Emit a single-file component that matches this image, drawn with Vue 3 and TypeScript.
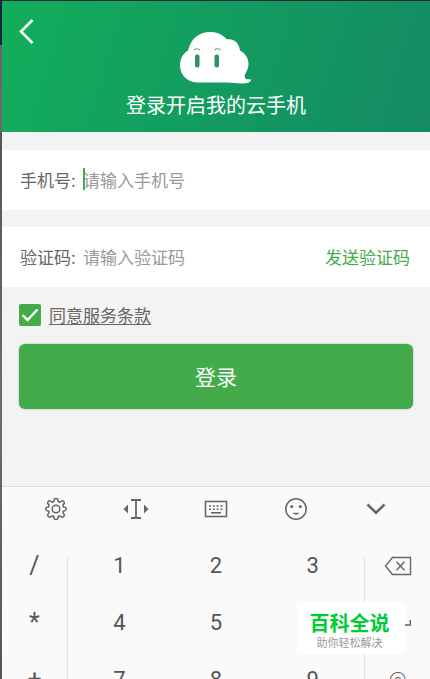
<script setup lang="ts">
import { ref } from 'vue'

const phone = ref<string>('')
const code = ref<string>('')
const agreed = ref<boolean>(true)

const symbols: string[] = ['/', '*', '+']
const digits: string[] = ['1', '2', '3', '4', '5', '6', '7', '8', '9']
</script>

<template>
  <div class="screen">
    <div class="backdrop" aria-hidden="true"></div>
    <main class="login">
      <header class="hero">
        <button class="back" type="button" aria-label="返回">
          <svg width="16" height="26" viewBox="0 0 16 26" fill="none" stroke="#fff" stroke-width="2.6">
            <path d="M14.500 2 3 13.500 14.500 25" />
          </svg>
        </button>
        <svg class="cloud" width="74" height="54" viewBox="0 0 74 54" aria-hidden="true">
          <path
            fill="#fff"
            d="M18 52.500C8 52 1 44.500 1 35.500C1 28.500 4 23.500 9 20.500C12 8.500 20 2 31 2C38.500 2 43.500 4.500 48 9.500C55 8.500 60 13 61 20.500C66.500 23.500 69.500 28.500 69.500 34C69.500 39.500 66.500 42.500 65.800 45.500C65 49 68 49.500 72.500 49.500C71 53 66.500 53.800 62 53.500C56 53.200 52 52.200 46 52.500Z"
          />
          <g fill="#2b9461">
            <rect x="16" y="24.500" width="4.500" height="13" rx="2" />
            <rect x="35.500" y="24.500" width="4.500" height="13" rx="2" />
          </g>
          <path d="M15 20Q18 17.500 21 20M35.500 20Q38.500 17.500 41.500 20" fill="none" stroke="#5fae88" stroke-width="1.200" />
        </svg>
        <h1>登录开启我的云手机</h1>
      </header>

      <form class="form" @submit.prevent>
        <div class="row">
          <label for="phone">手机号:</label>
          <div class="field">
            <input id="phone" v-model="phone" class="active" type="tel" placeholder="请输入手机号" />
            <span class="caret"></span>
          </div>
        </div>
        <div class="row">
          <label for="code">验证码:</label>
          <div class="field">
            <input id="code" v-model="code" type="text" placeholder="请输入验证码" />
          </div>
          <button class="send" type="button">发送验证码</button>
        </div>
        <div class="terms">
          <input id="agree" v-model="agreed" type="checkbox" aria-label="同意服务条款" />
          <svg v-if="agreed" class="tick" width="22" height="22" viewBox="0 0 22 22" fill="none" stroke="#fff" stroke-width="2.400" aria-hidden="true">
            <path d="M3.500 11 8.500 16 18.500 5.500" />
          </svg>
          <a href="#terms">同意服务条款</a>
        </div>
        <button class="submit" type="submit">登录</button>
      </form>

      <section class="keyboard" aria-label="键盘">
        <div class="tools">
          <button type="button" aria-label="设置">
            <svg width="24" height="24" viewBox="0 0 24 24" fill="none" stroke="#666" stroke-width="1.500" stroke-linejoin="round">
              <circle cx="12" cy="12" r="3.800" />
              <path d="M10.300 2.200Q12 1 13.700 2.200Q13.700 5 15.800 5.200Q17.500 3.500 19 3.900Q20.500 5 20.300 6.400Q18.300 8.300 19.400 10.100Q22 10.200 22.300 12Q22 13.900 19.400 13.900Q18.300 15.700 20.300 17.600Q20.500 19 19 20.100Q17.500 20.500 15.800 18.800Q13.700 19 13.700 21.800Q12 23 10.300 21.800Q10.300 19 8.200 18.800Q6.500 20.500 5 20.100Q3.500 19 3.700 17.600Q5.700 15.700 4.600 13.900Q2 13.900 1.700 12Q2 10.200 4.600 10.100Q5.700 8.300 3.700 6.400Q3.500 5 5 3.900Q6.500 3.500 8.200 5.200Q10.300 5 10.300 2.200Z" />
            </svg>
          </button>
          <button type="button" aria-label="移动光标">
            <svg width="26" height="22" viewBox="0 0 26 22">
              <path d="M8 2h10M8 20h10M13 2v18" fill="none" stroke="#666" stroke-width="1.800" />
              <path d="M5 6.500v9L.5 11zM21 6.500v9l4.500-4.500z" fill="#666" />
            </svg>
          </button>
          <button type="button" aria-label="切换键盘">
            <svg width="24" height="18" viewBox="0 0 24 18" fill="none" stroke="#666" stroke-width="1.600">
              <rect x="1.500" y="1.500" width="21" height="15" />
              <path d="M5 6h14M5 9.200h14" stroke-width="1.600" stroke-dasharray="2 1.800" />
              <path d="M7 12.800h10" />
            </svg>
          </button>
          <button type="button" aria-label="表情">
            <svg width="24" height="24" viewBox="0 0 24 24" fill="none" stroke="#666" stroke-width="1.500">
              <circle cx="12" cy="12" r="10.200" />
              <path d="M9.500 15.800q2.500 2.200 5 0" />
              <g fill="#666" stroke="none">
                <circle cx="7.700" cy="9.400" r="1.500" />
                <circle cx="16.300" cy="9.400" r="1.500" />
              </g>
            </svg>
          </button>
          <button type="button" aria-label="收起键盘">
            <svg width="20" height="12" viewBox="0 0 20 12" fill="none" stroke="#666" stroke-width="2.600">
              <path d="M1.500 1.500 10 9.700 18.500 1.500" />
            </svg>
          </button>
        </div>
        <div class="keys">
          <div class="side symbols">
            <button v-for="s in symbols" :key="s" class="key" type="button">{{ s }}</button>
          </div>
          <div class="digits">
            <button v-for="d in digits" :key="d" class="key" type="button">{{ d }}</button>
          </div>
          <div class="side">
            <button class="key" type="button" aria-label="删除">
              <svg width="28" height="20" viewBox="0 0 28 20" fill="none" stroke="#666" stroke-width="1.400">
                <path d="M8.500 1.500H26.500V18.500H8.500L1.500 10z" />
                <path d="M12.500 5.800 20.500 14.200M20.500 5.800 12.500 14.200" />
              </svg>
            </button>
            <button class="key" type="button" aria-label="换行">
              <svg width="28" height="16" viewBox="0 0 28 16" fill="none" stroke="#666" stroke-width="1.500">
                <path d="M26.300 5V10H2M6 6 2 10 6 14" />
              </svg>
            </button>
            <button class="key at" type="button">@</button>
          </div>
        </div>
      </section>
    </main>

    <aside class="watermark">
      <strong>百科全说</strong>
      <span>助你轻松解决</span>
    </aside>
  </div>
</template>

<style>
body {
  margin: 0;
}
</style>

<style scoped>
.screen {
  position: relative;
  display: grid;
  grid-template-columns: 2px 1fr;
  height: 100vh;
  overflow: hidden;
  box-sizing: border-box;
  border-top: 1px solid #1d2836;
  background: #f3f3f3;
  color: #666;
  font-family: 'Noto Sans CJK SC', sans-serif;
  font-size: 17px;
}

button {
  margin: 0;
  padding: 0;
  border: 0;
  background: none;
  color: inherit;
  font: inherit;
}

svg {
  display: block;
}

.backdrop {
  background: linear-gradient(#172638 0 44px, #6c6664 44px 131px, #555 131px, #6c6c6c 400px, #555);
}

.login {
  min-width: 0;
}

.hero {
  position: relative;
  display: flex;
  flex-direction: column;
  align-items: center;
  box-sizing: border-box;
  height: 131px;
  padding-top: 29px;
  background: linear-gradient(107deg, #12ae5b, #148a64);
}

.back {
  position: absolute;
  top: 17px;
  left: 16px;
}

h1 {
  margin: 6px 0 0;
  color: #fff;
  font-size: 20px;
  font-weight: 400;
  line-height: 30px;
}

.row {
  display: flex;
  align-items: center;
  box-sizing: border-box;
  height: 60px;
  margin-top: 18px;
  padding: 0 20px 2px 18px;
  background: #fff;
}

.row + .row {
  margin-top: 17px;
}

.row label {
  width: 63px;
  flex: none;
}

.field {
  position: relative;
  flex: 1;
  min-width: 0;
}

.field input {
  display: block;
  box-sizing: border-box;
  width: 100%;
  height: 30px;
  padding: 0;
  border: 0;
  outline: 0;
  background: none;
  color: #444;
  font: inherit;
}

.field input::placeholder {
  color: #999;
  opacity: 1;
}

.field .active {
  caret-color: transparent;
}

.caret {
  position: absolute;
  top: 4px;
  left: 0;
  width: 2px;
  height: 22px;
  background: #43ab49;
}

.send {
  flex: none;
  color: #43ab49;
}

.terms {
  position: relative;
  display: flex;
  align-items: center;
  gap: 8px;
  height: 24px;
  margin-top: 16px;
  padding-left: 17px;
}

.terms input {
  appearance: none;
  width: 22px;
  height: 22px;
  margin: 0;
  border-radius: 2px;
  background: #dedede;
}

.terms input:checked {
  background: #43ab49;
}

.tick {
  position: absolute;
  top: 1px;
  left: 17px;
  pointer-events: none;
}

.terms a {
  color: #666;
  line-height: 24px;
  text-decoration-thickness: 1px;
  text-underline-offset: 2px;
}

.submit {
  display: block;
  width: calc(100% - 34px);
  height: 65px;
  margin: 17px 17px 0;
  padding-bottom: 2px;
  border-radius: 6px;
  background: #43ab49;
  box-shadow: 0 0 2px #9ab99c;
  color: #fff;
  font-size: 21px;
}

.keyboard {
  margin-top: 77px;
  border-top: 1px solid #dedede;
  background: #fafafa;
}

.tools {
  display: grid;
  grid-template-columns: repeat(5, 1fr);
  height: 44px;
  padding: 0 14px;
}

.tools button {
  display: grid;
  place-items: center;
}

.keys {
  display: grid;
  grid-template-columns: 65px 1fr 65px;
  padding-top: 6px;
}

.side,
.digits {
  display: grid;
  grid-auto-rows: 57px;
}

.digits {
  grid-template-columns: repeat(3, 1fr);
  padding: 0 3px;
  border: solid #e2e2e2;
  border-width: 0 1px;
  clip-path: inset(19px 0 0);
}

.key {
  display: grid;
  place-items: center;
  color: #555;
  font-family: Roboto, sans-serif;
  font-size: 22px;
}

.symbols .key {
  font-size: 25px;
}

.at {
  font-size: 20px;
  font-weight: 300;
}

.watermark {
  position: absolute;
  right: 25px;
  bottom: 25px;
  display: flex;
  flex-direction: column;
  align-items: center;
  box-sizing: border-box;
  width: 108px;
  height: 52px;
  padding: 9px 3px 0 0;
  background: #fff;
}

.watermark strong {
  color: #0c3;
  font-size: 20px;
  font-weight: 700;
  line-height: 24px;
}

.watermark span {
  color: #999;
  font-size: 11px;
  line-height: 14px;
}
</style>
